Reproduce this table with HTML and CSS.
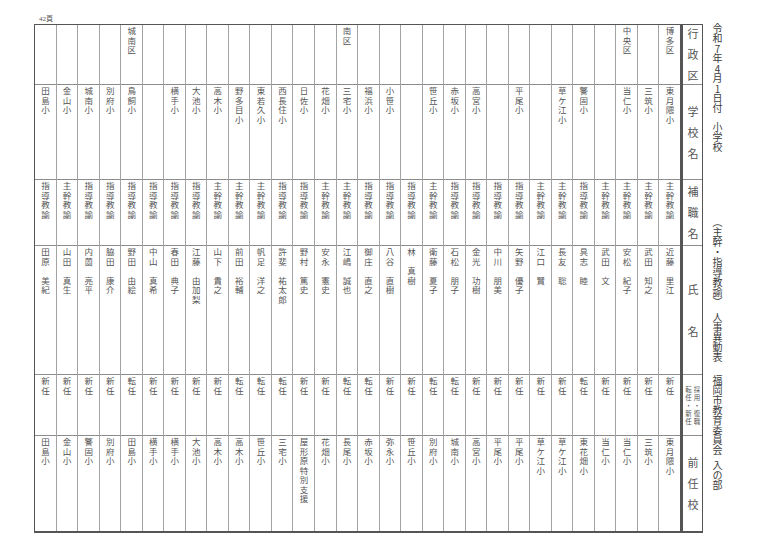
FILE: index.html
```html
<!DOCTYPE html>
<html lang="ja">
<head>
<meta charset="utf-8">
<title>人事異動表</title>
<link rel="stylesheet" href="styles.css">
</head>
<body>
<div class="page">
  <div class="main">
    <div class="pagenum">42頁</div>
    <div class="table">
      <div class="col head">
        <div class="cell r1"><span class="hl">行政区</span></div>
        <div class="cell r2"><span class="hl">学校名</span></div>
        <div class="cell r3"><span class="hl">補職名</span></div>
        <div class="cell r4"><span class="hl hl2">氏名</span></div>
        <div class="cell r5 kinds"><span class="sm">採用・復職</span><span class="sm">転任・新任</span></div>
        <div class="cell r6"><span class="hl">前任校</span></div>
      </div>

      <div class="col">
        <div class="cell r1"><span class="v">博多区</span></div>
        <div class="cell r2"><span class="v">東月隈小</span></div>
        <div class="cell r3"><span class="v">主幹教諭</span></div>
        <div class="cell r4"><span class="v">近藤　里江</span></div>
        <div class="cell r5"><span class="v">新任</span></div>
        <div class="cell r6"><span class="v">東月隈小</span></div>
      </div>
      <div class="col">
        <div class="cell r1"></div>
        <div class="cell r2"><span class="v">三筑小</span></div>
        <div class="cell r3"><span class="v">主幹教諭</span></div>
        <div class="cell r4"><span class="v">武田　知之</span></div>
        <div class="cell r5"><span class="v">新任</span></div>
        <div class="cell r6"><span class="v">三筑小</span></div>
      </div>
      <div class="col">
        <div class="cell r1"><span class="v">中央区</span></div>
        <div class="cell r2"><span class="v">当仁小</span></div>
        <div class="cell r3"><span class="v">主幹教諭</span></div>
        <div class="cell r4"><span class="v">安松　紀子</span></div>
        <div class="cell r5"><span class="v">新任</span></div>
        <div class="cell r6"><span class="v">当仁小</span></div>
      </div>
      <div class="col">
        <div class="cell r1"></div>
        <div class="cell r2"></div>
        <div class="cell r3"><span class="v">主幹教諭</span></div>
        <div class="cell r4"><span class="v">武田　文</span></div>
        <div class="cell r5"><span class="v">新任</span></div>
        <div class="cell r6"><span class="v">当仁小</span></div>
      </div>
      <div class="col">
        <div class="cell r1"></div>
        <div class="cell r2"><span class="v">警固小</span></div>
        <div class="cell r3"><span class="v">指導教諭</span></div>
        <div class="cell r4"><span class="v">具志　睦</span></div>
        <div class="cell r5"><span class="v">転任</span></div>
        <div class="cell r6"><span class="v">東花畑小</span></div>
      </div>
      <div class="col">
        <div class="cell r1"></div>
        <div class="cell r2"><span class="v">草ケ江小</span></div>
        <div class="cell r3"><span class="v">主幹教諭</span></div>
        <div class="cell r4"><span class="v">長友　聡</span></div>
        <div class="cell r5"><span class="v">新任</span></div>
        <div class="cell r6"><span class="v">草ケ江小</span></div>
      </div>
      <div class="col">
        <div class="cell r1"></div>
        <div class="cell r2"></div>
        <div class="cell r3"><span class="v">主幹教諭</span></div>
        <div class="cell r4"><span class="v">江口　賢</span></div>
        <div class="cell r5"><span class="v">新任</span></div>
        <div class="cell r6"><span class="v">草ケ江小</span></div>
      </div>
      <div class="col">
        <div class="cell r1"></div>
        <div class="cell r2"><span class="v">平尾小</span></div>
        <div class="cell r3"><span class="v">指導教諭</span></div>
        <div class="cell r4"><span class="v">矢野　優子</span></div>
        <div class="cell r5"><span class="v">新任</span></div>
        <div class="cell r6"><span class="v">平尾小</span></div>
      </div>
      <div class="col">
        <div class="cell r1"></div>
        <div class="cell r2"></div>
        <div class="cell r3"><span class="v">指導教諭</span></div>
        <div class="cell r4"><span class="v">中川　朋美</span></div>
        <div class="cell r5"><span class="v">新任</span></div>
        <div class="cell r6"><span class="v">平尾小</span></div>
      </div>
      <div class="col">
        <div class="cell r1"></div>
        <div class="cell r2"><span class="v">高宮小</span></div>
        <div class="cell r3"><span class="v">指導教諭</span></div>
        <div class="cell r4"><span class="v">金光　功樹</span></div>
        <div class="cell r5"><span class="v">新任</span></div>
        <div class="cell r6"><span class="v">高宮小</span></div>
      </div>
      <div class="col">
        <div class="cell r1"></div>
        <div class="cell r2"><span class="v">赤坂小</span></div>
        <div class="cell r3"><span class="v">指導教諭</span></div>
        <div class="cell r4"><span class="v">石松　朋子</span></div>
        <div class="cell r5"><span class="v">転任</span></div>
        <div class="cell r6"><span class="v">城南小</span></div>
      </div>
      <div class="col">
        <div class="cell r1"></div>
        <div class="cell r2"><span class="v">笹丘小</span></div>
        <div class="cell r3"><span class="v">主幹教諭</span></div>
        <div class="cell r4"><span class="v">衛藤　夏子</span></div>
        <div class="cell r5"><span class="v">転任</span></div>
        <div class="cell r6"><span class="v">別府小</span></div>
      </div>
      <div class="col">
        <div class="cell r1"></div>
        <div class="cell r2"></div>
        <div class="cell r3"><span class="v">指導教諭</span></div>
        <div class="cell r4"><span class="v">林　真樹</span></div>
        <div class="cell r5"><span class="v">新任</span></div>
        <div class="cell r6"><span class="v">笹丘小</span></div>
      </div>
      <div class="col">
        <div class="cell r1"></div>
        <div class="cell r2"><span class="v">小笹小</span></div>
        <div class="cell r3"><span class="v">指導教諭</span></div>
        <div class="cell r4"><span class="v">八谷　直樹</span></div>
        <div class="cell r5"><span class="v">新任</span></div>
        <div class="cell r6"><span class="v">弥永小</span></div>
      </div>
      <div class="col">
        <div class="cell r1"></div>
        <div class="cell r2"><span class="v">福浜小</span></div>
        <div class="cell r3"><span class="v">指導教諭</span></div>
        <div class="cell r4"><span class="v">御庄　直之</span></div>
        <div class="cell r5"><span class="v">転任</span></div>
        <div class="cell r6"><span class="v">赤坂小</span></div>
      </div>
      <div class="col">
        <div class="cell r1"><span class="v">南区</span></div>
        <div class="cell r2"><span class="v">三宅小</span></div>
        <div class="cell r3"><span class="v">主幹教諭</span></div>
        <div class="cell r4"><span class="v">江嶋　誠也</span></div>
        <div class="cell r5"><span class="v">転任</span></div>
        <div class="cell r6"><span class="v">長尾小</span></div>
      </div>
      <div class="col">
        <div class="cell r1"></div>
        <div class="cell r2"><span class="v">花畑小</span></div>
        <div class="cell r3"><span class="v">主幹教諭</span></div>
        <div class="cell r4"><span class="v">安永　憲史</span></div>
        <div class="cell r5"><span class="v">新任</span></div>
        <div class="cell r6"><span class="v">花畑小</span></div>
      </div>
      <div class="col">
        <div class="cell r1"></div>
        <div class="cell r2"><span class="v">日佐小</span></div>
        <div class="cell r3"><span class="v">指導教諭</span></div>
        <div class="cell r4"><span class="v">野村　篤史</span></div>
        <div class="cell r5"><span class="v">新任</span></div>
        <div class="cell r6"><span class="v">屋形原特別支援</span></div>
      </div>
      <div class="col">
        <div class="cell r1"></div>
        <div class="cell r2"><span class="v">西長住小</span></div>
        <div class="cell r3"><span class="v">指導教諭</span></div>
        <div class="cell r4"><span class="v">許斐　祐太郎</span></div>
        <div class="cell r5"><span class="v">転任</span></div>
        <div class="cell r6"><span class="v">三宅小</span></div>
      </div>
      <div class="col">
        <div class="cell r1"></div>
        <div class="cell r2"><span class="v">東若久小</span></div>
        <div class="cell r3"><span class="v">主幹教諭</span></div>
        <div class="cell r4"><span class="v">帆足　洋之</span></div>
        <div class="cell r5"><span class="v">転任</span></div>
        <div class="cell r6"><span class="v">笹丘小</span></div>
      </div>
      <div class="col">
        <div class="cell r1"></div>
        <div class="cell r2"><span class="v">野多目小</span></div>
        <div class="cell r3"><span class="v">主幹教諭</span></div>
        <div class="cell r4"><span class="v">前田　裕輔</span></div>
        <div class="cell r5"><span class="v">転任</span></div>
        <div class="cell r6"><span class="v">高木小</span></div>
      </div>
      <div class="col">
        <div class="cell r1"></div>
        <div class="cell r2"><span class="v">高木小</span></div>
        <div class="cell r3"><span class="v">主幹教諭</span></div>
        <div class="cell r4"><span class="v">山下　貴之</span></div>
        <div class="cell r5"><span class="v">新任</span></div>
        <div class="cell r6"><span class="v">高木小</span></div>
      </div>
      <div class="col">
        <div class="cell r1"></div>
        <div class="cell r2"><span class="v">大池小</span></div>
        <div class="cell r3"><span class="v">指導教諭</span></div>
        <div class="cell r4"><span class="v">江藤　由加梨</span></div>
        <div class="cell r5"><span class="v">新任</span></div>
        <div class="cell r6"><span class="v">大池小</span></div>
      </div>
      <div class="col">
        <div class="cell r1"></div>
        <div class="cell r2"><span class="v">横手小</span></div>
        <div class="cell r3"><span class="v">指導教諭</span></div>
        <div class="cell r4"><span class="v">春田　典子</span></div>
        <div class="cell r5"><span class="v">新任</span></div>
        <div class="cell r6"><span class="v">横手小</span></div>
      </div>
      <div class="col">
        <div class="cell r1"></div>
        <div class="cell r2"></div>
        <div class="cell r3"><span class="v">指導教諭</span></div>
        <div class="cell r4"><span class="v">中山　真希</span></div>
        <div class="cell r5"><span class="v">新任</span></div>
        <div class="cell r6"><span class="v">横手小</span></div>
      </div>
      <div class="col">
        <div class="cell r1"><span class="v">城南区</span></div>
        <div class="cell r2"><span class="v">鳥飼小</span></div>
        <div class="cell r3"><span class="v">指導教諭</span></div>
        <div class="cell r4"><span class="v">野田　由絵</span></div>
        <div class="cell r5"><span class="v">転任</span></div>
        <div class="cell r6"><span class="v">田島小</span></div>
      </div>
      <div class="col">
        <div class="cell r1"></div>
        <div class="cell r2"><span class="v">別府小</span></div>
        <div class="cell r3"><span class="v">指導教諭</span></div>
        <div class="cell r4"><span class="v">脇田　康介</span></div>
        <div class="cell r5"><span class="v">新任</span></div>
        <div class="cell r6"><span class="v">別府小</span></div>
      </div>
      <div class="col">
        <div class="cell r1"></div>
        <div class="cell r2"><span class="v">城南小</span></div>
        <div class="cell r3"><span class="v">指導教諭</span></div>
        <div class="cell r4"><span class="v">内薗　亮平</span></div>
        <div class="cell r5"><span class="v">新任</span></div>
        <div class="cell r6"><span class="v">警固小</span></div>
      </div>
      <div class="col">
        <div class="cell r1"></div>
        <div class="cell r2"><span class="v">金山小</span></div>
        <div class="cell r3"><span class="v">主幹教諭</span></div>
        <div class="cell r4"><span class="v">山田　真生</span></div>
        <div class="cell r5"><span class="v">新任</span></div>
        <div class="cell r6"><span class="v">金山小</span></div>
      </div>
      <div class="col">
        <div class="cell r1"></div>
        <div class="cell r2"><span class="v">田島小</span></div>
        <div class="cell r3"><span class="v">指導教諭</span></div>
        <div class="cell r4"><span class="v">田原　美紀</span></div>
        <div class="cell r5"><span class="v">新任</span></div>
        <div class="cell r6"><span class="v">田島小</span></div>
      </div>
    </div>
  </div>
  <div class="title">
    <span class="seg">令和<span class="tcy">7</span>年<span class="tcy">4</span>月<span class="tcy">1</span>日付</span>
    <span class="seg s2">小学校</span>
    <span class="seg s3">（主幹・指導教諭）</span>
    <span class="seg s4">人事異動表</span>
    <span class="seg s5">福岡市教育委員会</span>
    <span class="seg s6">入の部</span>
  </div>
</div>
</body>
</html>
```

FILE: styles.css
```css
html, body {
  margin: 0;
  background: #ffffff;
}
body {
  color: #555555;
  font-family: "Noto Sans CJK JP", "Noto Sans", sans-serif;
}
.page {
  display: flex;
  align-items: flex-start;
  padding: 14px 0 0 34px;
}
.main {
  display: flex;
  flex-direction: column;
  width: 669px;
}
.pagenum {
  height: 10px;
  line-height: 10px;
  font-size: 7px;
  padding-left: 5px;
  color: #555555;
  font-family: "Liberation Serif", "Noto Sans CJK JP", serif;
}
.table {
  display: flex;
  flex-direction: row-reverse;
  border: 1px solid #555555;
  border-bottom-width: 2px;
}
.col {
  flex: 1 1 0;
  min-width: 0;
  display: flex;
  flex-direction: column;
  border-left: 1px solid #a3a3a3;
}
.col:last-child {
  border-left: none;
}
.head {
  flex: 0 0 22px;
  box-sizing: border-box;
  border-left: 3px solid #555555;
}
.cell {
  box-sizing: border-box;
  display: flex;
  justify-content: center;
  align-items: flex-start;
  padding-top: 1.5px;
  border-bottom: 1px solid #8c8c8c;
}
.r1 { height: 60px; }
.r2 { height: 95px; }
.r3 { height: 66px; }
.r4 { height: 129px; }
.r5 { height: 61px; }
.r6 { height: 95px; border-bottom: none; }

.v {
  writing-mode: vertical-rl;
  white-space: nowrap;
  font-size: 8.5px;
  letter-spacing: 1px;
  line-height: 1;
}
.head .cell {
  align-items: center;
  padding-top: 0;
}
.hl {
  writing-mode: vertical-rl;
  white-space: nowrap;
  font-size: 11px;
  line-height: 1;
  letter-spacing: 10px;
  padding-top: 10px;
  flex-shrink: 0;
}
.hl2 {
  letter-spacing: 31px;
  padding-top: 31px;
}
.kinds {
  flex-direction: row-reverse;
  gap: 2px;
}
.sm {
  writing-mode: vertical-rl;
  white-space: nowrap;
  font-size: 6.5px;
  line-height: 1;
  letter-spacing: 1.5px;
  padding-top: 1.5px;
  flex-shrink: 0;
}
.title {
  display: flex;
  flex-direction: column;
  align-items: center;
  margin-left: 9px;
  padding-top: 9px;
  font-size: 10px;
  color: #3c3c3c;
}
.seg {
  writing-mode: vertical-rl;
  white-space: nowrap;
  line-height: 1;
}
.tcy {
  text-combine-upright: all;
}
.s2 { margin-top: 9px; }
.s3 { margin-top: 65px; }
.s4 { margin-top: 5px; }
.s5 { margin-top: 13px; }
.s6 { margin-top: 5px; }
```
